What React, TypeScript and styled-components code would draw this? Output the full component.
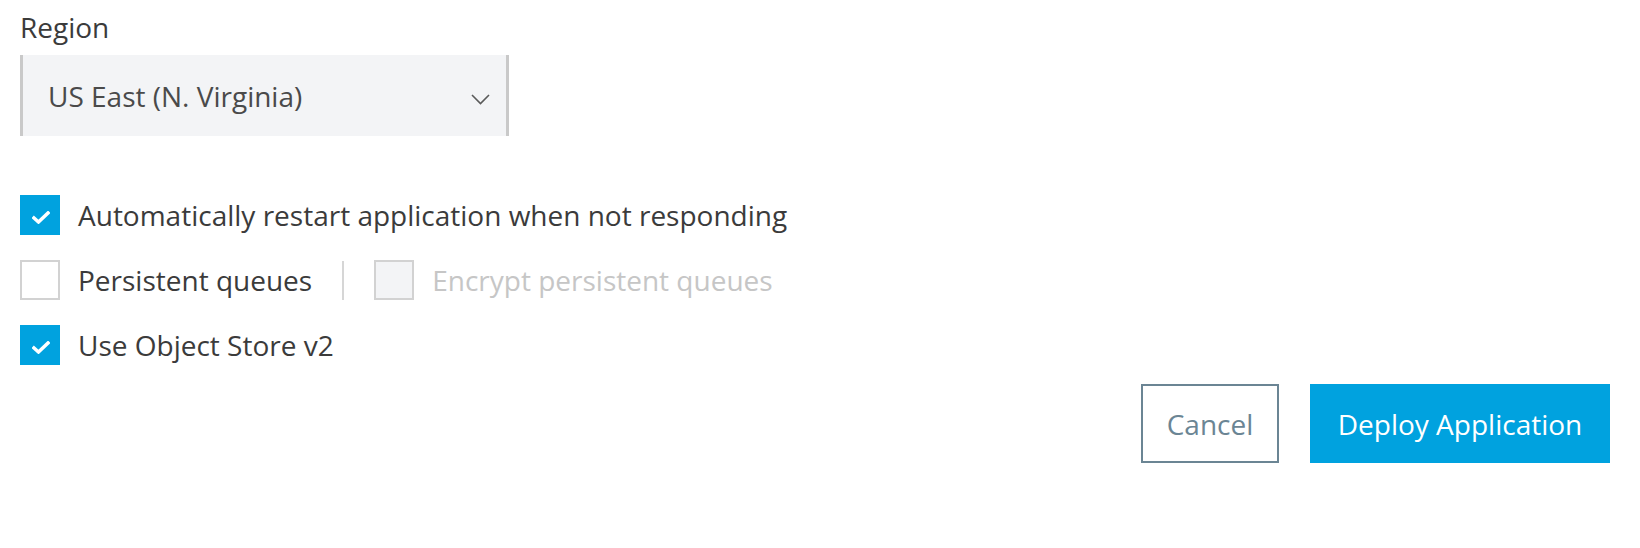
import React, { useState } from "react";
import styled, { createGlobalStyle } from "styled-components";

const GlobalStyle = createGlobalStyle`
  body {
    margin: 0;
    background: #ffffff;
    font-family: "Open Sans", "Liberation Sans", sans-serif;
  }
`;

interface CheckOption {
  id: string;
  label: string;
  checked: boolean;
  disabled?: boolean;
}

const Check = () => (
  <CheckIcon width="18" height="13" viewBox="0 0 18 13">
    <polyline
      points="2,7 6.5,11 16,2"
      fill="none"
      stroke="#ffffff"
      strokeWidth="3.5"
      strokeLinecap="square"
    />
  </CheckIcon>
);

const Chevron = () => (
  <ChevronIcon width="19" height="11" viewBox="0 0 19 11">
    <polyline
      points="1,1 9.5,9.5 18,1"
      fill="none"
      stroke="#5a5a5a"
      strokeWidth="1.6"
    />
  </ChevronIcon>
);

function CheckField({
  option,
  onToggle,
}: {
  option: CheckOption;
  onToggle: (id: string) => void;
}) {
  return (
    <CheckLabel
      $disabled={option.disabled}
      onClick={() => !option.disabled && onToggle(option.id)}
    >
      <Box $checked={option.checked} $disabled={option.disabled}>
        {option.checked ? <Check /> : null}
      </Box>
      {option.label}
    </CheckLabel>
  );
}

export default function App() {
  const [options, setOptions] = useState<Record<string, CheckOption>>({
    restart: {
      id: "restart",
      label: "Automatically restart application when not responding",
      checked: true,
    },
    persistent: { id: "persistent", label: "Persistent queues", checked: false },
    encrypt: {
      id: "encrypt",
      label: "Encrypt persistent queues",
      checked: false,
      disabled: true,
    },
    objectStore: { id: "objectStore", label: "Use Object Store v2", checked: true },
  });

  const toggle = (id: string) =>
    setOptions(prev => ({
      ...prev,
      [id]: { ...prev[id], checked: !prev[id].checked },
    }));

  return (
    <>
      <GlobalStyle />
      <Page>
        <Label>Region</Label>
        <Select>
          <span>US East (N. Virginia)</span>
          <Chevron />
        </Select>

        <CheckList>
          <Row>
            <CheckField option={options.restart} onToggle={toggle} />
          </Row>
          <Row>
            <CheckField option={options.persistent} onToggle={toggle} />
            <Divider />
            <CheckField option={options.encrypt} onToggle={toggle} />
          </Row>
          <Row>
            <CheckField option={options.objectStore} onToggle={toggle} />
          </Row>
        </CheckList>

        <Actions>
          <CancelButton>Cancel</CancelButton>
          <PrimaryButton>Deploy Application</PrimaryButton>
        </Actions>
      </Page>
    </>
  );
}

const Page = styled.div`
  padding: 8px 30px 0 20px;
  font-size: 28px;
  line-height: 38px;
  color: #3b3b3b;
`;

const Label = styled.div`
  color: #3b3b3b;
`;

const Select = styled.div`
  margin-top: 9px;
  width: 489px;
  height: 81px;
  box-sizing: border-box;
  display: flex;
  align-items: center;
  justify-content: space-between;
  padding: 0 16px 0 25px;
  background: #f3f4f6;
  border-left: 3px solid #c9c9c9;
  border-right: 3px solid #c9c9c9;
  color: #4a4a4a;
  cursor: pointer;
`;

const ChevronIcon = styled.svg`
  margin-top: 8px;
`;

const CheckList = styled.div`
  margin-top: 59px;
  display: flex;
  flex-direction: column;
  gap: 25px;
`;

const Row = styled.div`
  display: flex;
  align-items: center;
  height: 40px;
`;

const CheckLabel = styled.label<{ $disabled?: boolean }>`
  display: flex;
  align-items: center;
  gap: 18px;
  color: ${p => (p.$disabled ? "#c6c6c6" : "#3b3b3b")};
  cursor: ${p => (p.$disabled ? "default" : "pointer")};
  user-select: none;
`;

const Box = styled.span<{ $checked: boolean; $disabled?: boolean }>`
  width: 40px;
  height: 40px;
  box-sizing: border-box;
  display: flex;
  align-items: center;
  justify-content: center;
  background: ${p =>
    p.$checked ? "#00a2df" : p.$disabled ? "#f3f4f6" : "#ffffff"};
  border: ${p => (p.$checked ? "none" : "2px solid #d2d2d2")};
`;

const CheckIcon = styled.svg`
  margin: 5px 0 0 1px;
`;

const Divider = styled.span`
  width: 2px;
  height: 39px;
  background: #d6d6d6;
  margin: 0 30px;
`;

const Actions = styled.div`
  margin-top: 19px;
  display: flex;
  justify-content: flex-end;
  gap: 31px;
`;

const BaseButton = styled.button`
  height: 79px;
  box-sizing: border-box;
  font-family: inherit;
  font-size: 28px;
  line-height: 38px;
  cursor: pointer;
`;

const CancelButton = styled(BaseButton)`
  width: 138px;
  background: #ffffff;
  border: 2px solid #6b8594;
  color: #6b8594;
`;

const PrimaryButton = styled(BaseButton)`
  width: 300px;
  background: #00a2df;
  border: none;
  color: #ffffff;
`;
